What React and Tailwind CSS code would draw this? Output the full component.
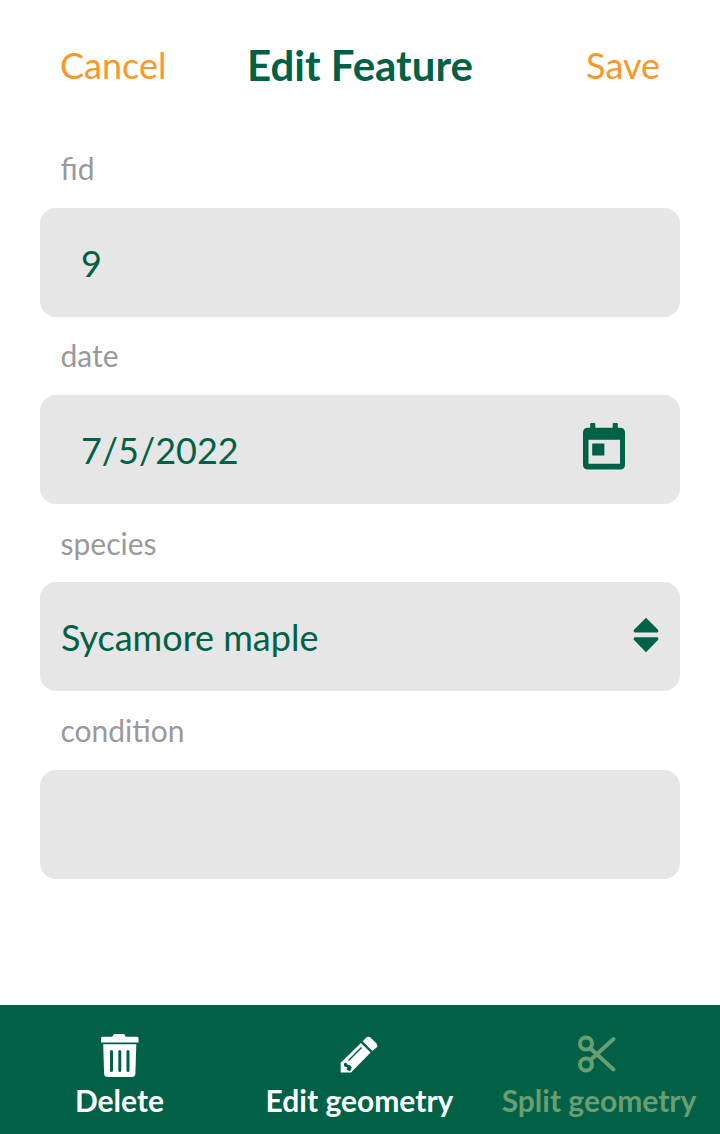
function Field({ label, children, pad = "pl-[40.5px]" }) {
  return (
    <div className="h-[187.4px]">
      <div className="h-[69.6px] pl-[20.5px] pt-[10px] text-[30px] leading-[40px] text-[#999999]">{label}</div>
      <div className={"mx-[0.4px] flex h-[109px] items-center justify-between rounded-[16px] bg-[#e6e6e6] pt-px text-[36px] text-[#006146] " + pad}>{children}</div>
    </div>
  );
}

function Action({ label, width, muted, children }) {
  return (
    <button className={"flex shrink-0 flex-col items-center " + width + (muted ? " text-[#689e71]" : " text-white")}>
      <span className="flex h-[50px] items-center">{children}</span>
      <span className="whitespace-nowrap text-[30px] font-bold leading-[40px]">{label}</span>
    </button>
  );
}

function CalendarIcon() {
  return (
    <svg className="mb-[7px]" width="42" height="47" viewBox="0 0 42 47" fill="currentColor">
      <path d="M8 0h3.5q.8 0 .8.8V4.7H29.7V.8q0-.8.8-.8H34q.8 0 .8.8V4.7H37q5 0 5 5V41.4q0 5-5 5H5q-5 0-5-5V9.7q0-5 5-5H7.2V.8Q7.2 0 8 0ZM5.5 16.8V40.7H37V16.8Z" fillRule="evenodd" />
      <rect x="9.2" y="20.4" width="12.2" height="12.2" rx=".7" />
    </svg>
  );
}

function SortIcon() {
  return (
    <svg className="mb-[5px]" width="26" height="36" viewBox="0 0 26 36" fill="currentColor">
      <path d="M13 .8 25.2 13q.8 2-1 2.5H1.8Q0 15 .8 13ZM1.8 20.3H24.2q1.8.5 1 2.5L13 35.3.8 22.8q-.8-2 1-2.5Z" />
    </svg>
  );
}

function TrashIcon() {
  return (
    <svg width="39" height="43" viewBox="0 0 39 43" fill="currentColor">
      <path d="M14.5 0h9q1.5 0 2 2.8H37q1.5 0 1.5 1.5V8.4H1V4.3q0-1.5 1.5-1.5H12.5q.5-2.8 2-2.8Z" />
      <path fillRule="evenodd" d="M3.2 10.3H36.3L35.4 39.5q-.2 3.5-3.5 3.5H7.6q-3.3 0-3.5-3.5ZM10 17.5v19q0 1.5 1.5 1.5T13 36.500V17.500q0-1.5-1.5-1.5T10 17.500ZM18.300 17.500v19q0 1.5 1.5 1.5t1.5-1.5V17.500q0-1.5-1.5-1.5t-1.5 1.5ZM26.500 17.500v19q0 1.5 1.5 1.5t1.5-1.5V17.500q0-1.5-1.5-1.5t-1.5 1.5Z" />
    </svg>
  );
}

function PencilIcon() {
  return (
    <svg className="mr-[2px]" width="38" height="38" viewBox="0 0 38 38" fill="none">
      <path d="M.7 36.500V26.800L21 7 30.600 16.500 11 36.500Z" fill="currentColor" />
      <path d="M22.700 5.200 26.500 1.300q1.8-1.3 3.7 0L36.500 7.500q1.5 2 0 4L32.200 15Z" fill="currentColor" />
      <path d="M8.500 24.500 21.500 11.500" stroke="#006146" strokeWidth="1.4" />
      <path d="M4 27.500q1.300-1.700 3 0l.7 1.200 2.500.5 1.400 2.300q0 2-1.600 3.500-2.500-.3-3.300-1.700l.4-2L4 30.300Z" fill="#006146" />
    </svg>
  );
}

function ScissorsIcon() {
  return (
    <svg className="mr-[4px]" width="40" height="40" viewBox="0 0 40 40" fill="none" stroke="currentColor" strokeWidth="4" strokeLinecap="round">
      <circle cx="9" cy="8.5" r="6" />
      <circle cx="9" cy="29.5" r="6" />
      <path d="M13.500 13.500 36.500 34.500M13.500 25 36.500 4" />
    </svg>
  );
}

export default function App() {
  return (
    <main className="flex h-[1134px] w-[720px] flex-col overflow-hidden bg-white font-['Lato',sans-serif]">
      <header className="flex h-[138px] items-center justify-between px-[60px] pb-[7px] text-[36px] text-[#fd9626]">
        <button className="w-[100px] pb-[2px] text-left">Cancel</button>
        <h1 className="whitespace-nowrap text-[42px] font-bold text-[#006146]">Edit Feature</h1>
        <button className="w-[100px] pb-[2px] text-right">Save</button>
      </header>
      <section className="flex-1 px-[40px]">
        <Field label="fid">9</Field>
        <Field label="date" pad="pl-[40.5px] pr-[55px]">
          <span>7/5/2022</span>
          <CalendarIcon />
        </Field>
        <Field label="species" pad="pl-[20.5px] pr-[21px]">
          <span>Sycamore maple</span>
          <SortIcon />
        </Field>
        <Field label="condition" />
      </section>
      <footer className="flex h-[129px] shrink-0 bg-[#006146] pt-[25px]">
        <Action label="Delete" width="w-[239px]"><TrashIcon /></Action>
        <Action label="Edit geometry" width="w-[241px]"><PencilIcon /></Action>
        <Action label="Split geometry" width="w-[238px]" muted><ScissorsIcon /></Action>
      </footer>
    </main>
  );
}
